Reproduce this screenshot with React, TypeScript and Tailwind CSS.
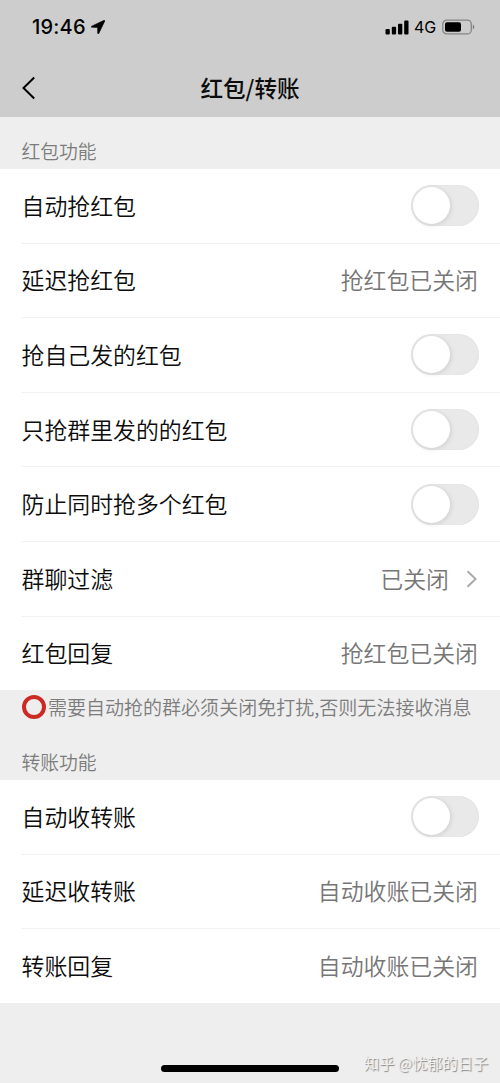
import React from 'react';

type Row = { label: string; value?: string; toggle?: boolean; arrow?: boolean };

const redPacketRows: Row[] = [
  { label: '自动抢红包', toggle: true },
  { label: '延迟抢红包', value: '抢红包已关闭' },
  { label: '抢自己发的红包', toggle: true },
  { label: '只抢群里发的的红包', toggle: true },
  { label: '防止同时抢多个红包', toggle: true },
  { label: '群聊过滤', value: '已关闭', arrow: true },
  { label: '红包回复', value: '抢红包已关闭' },
];

const transferRows: Row[] = [
  { label: '自动收转账', toggle: true },
  { label: '延迟收转账', value: '自动收账已关闭' },
  { label: '转账回复', value: '自动收账已关闭' },
];

function Toggle() {
  return (
    <button
      type="button"
      role="switch"
      aria-checked={false}
      className="flex h-[41px] w-[68px] items-center rounded-full bg-[#e9e9e9] pl-[2px] shadow-[inset_0_0_2px_#dcdcdc]"
    >
      <span className="size-[37px] rounded-full bg-white shadow-[1px_1px_5px_rgba(0,0,0,0.12)]" />
    </button>
  );
}

function SettingsList({ rows }: { rows: Row[] }) {
  return (
    <ul className="bg-white pl-[21px]">
      {rows.map((row, i) => (
        <li
          key={row.label}
          className={`flex h-[74.6px] items-center justify-between pr-[21px] last:h-[73.4px] ${
            i < rows.length - 1 ? 'border-b border-[#f1f1f1]' : ''
          }`}
        >
          <span className="mb-[2px] ml-[0.5px] text-[22.9px] leading-8 font-[350] text-[#0c0c0c]">{row.label}</span>
          {row.toggle && <Toggle />}
          {row.value && (
            <span className="mr-px mb-[2px] flex items-center text-[22.9px] leading-8 font-[350] text-[#767676]">
              {row.value}
              {row.arrow && (
                <svg className="mt-[2px] mr-px ml-[17px] h-[18px] w-[11px]" viewBox="0 0 11 18" fill="none" stroke="#a8a8a8" strokeWidth="1.9">
                  <path d="M1.5 1.2 9.6 9l-8.1 7.8" />
                </svg>
              )}
            </span>
          )}
        </li>
      ))}
    </ul>
  );
}

export default function App() {
  return (
    <div className="flex h-[1083px] w-[500px] flex-col overflow-hidden bg-[#eeeeee] font-['Noto_Sans_CJK_SC',sans-serif]">
      <header className="h-[117px] shrink-0 bg-[#cdcdcd]">
        <div className="flex h-[54px] items-center justify-between pr-[25px] pl-[32px] font-['Inter',sans-serif] text-black">
          <div className="flex items-center gap-[5px]">
            <span className="w-[54px] text-[20px] leading-6 font-medium tracking-[0.2px]">19:46</span>
            <svg className="size-[14px]" viewBox="0 0 14 14" fill="black" stroke="black" strokeWidth="0.6">
              <path d="M13.2.3.6 6.2c-.6.3-.4 1.1.2 1.1l5.8.1.1 5.8c0 .7.9.8 1.1.2L13.8.9c.2-.5-.1-.8-.6-.6Z" />
            </svg>
          </div>
          <div className="flex items-center">
            <svg className="h-[15px] w-[24px]" viewBox="0 0 24 15" fill="black">
              <rect x="0.5" y="9" width="4.3" height="5.5" rx="1" />
              <rect x="6.8" y="6.8" width="4.3" height="7.7" rx="1" />
              <rect x="13" y="3.8" width="4.3" height="10.7" rx="1" />
              <rect x="19.2" y="0.5" width="4.3" height="14" rx="1" />
            </svg>
            <span className="ml-[5px] w-[22px] text-[16px] leading-6">4G</span>
            <svg className="ml-[6px] h-[16px] w-[33px]" viewBox="0 0 33 16">
              <rect x="0.8" y="1.1" width="28.5" height="13.8" rx="4" fill="none" stroke="#858585" strokeWidth="1.3" />
              <rect x="3" y="3.2" width="16" height="9.6" rx="2" fill="black" />
              <path d="M30.9 5.6c1.8.8 1.8 4 0 4.8Z" fill="#777" />
            </svg>
          </div>
        </div>
        <div className="grid h-[68px] grid-cols-[1fr_auto_1fr] items-center">
          <button type="button" aria-label="返回" className="ml-[21px] flex">
            <svg className="h-[24px] w-[15px]" viewBox="0 0 15 24" fill="none" stroke="black" strokeWidth="2">
              <path d="M13.2 1.5 2.5 12l10.7 10.5" />
            </svg>
          </button>
          <h1 className="text-[22.6px] leading-8 font-medium text-[#0c0c0c]">红包/转账</h1>
        </div>
      </header>
      <main className="flex flex-col">
        <h2 className="h-[52px] pt-[20px] pl-[21.5px] text-[18.8px] leading-7 font-[350] text-[#7c7c7c]">红包功能</h2>
        <SettingsList rows={redPacketRows} />
        <p className="flex h-[37px] items-center pb-[3px] pl-[22px] text-[19.03px] leading-7 font-[350] text-[#7c7c7c]">
          <span className="mr-[2px] size-[24px] shrink-0 rounded-full border-[4px] border-[#cc2a24]" />
          <span className="whitespace-nowrap">需要自动抢的群必须关闭免打扰,否则无法接收消息</span>
        </p>
        <h2 className="h-[53px] pt-[21px] pl-[21.5px] text-[18.8px] leading-7 font-[350] text-[#7c7c7c]">转账功能</h2>
        <SettingsList rows={transferRows} />
      </main>
      <footer className="grid flex-1 grid-cols-[161px_178px_1fr] items-end">
        <div className="col-start-2 mb-[11px] h-[7px] rounded-full bg-black" />
        <span className="mb-[9px] ml-[25px] text-[15.2px] leading-6 whitespace-nowrap text-[#f0f0f0] [text-shadow:1px_1px_1px_#888]">
          知乎 @忧郁的日子
        </span>
      </footer>
    </div>
  );
}
